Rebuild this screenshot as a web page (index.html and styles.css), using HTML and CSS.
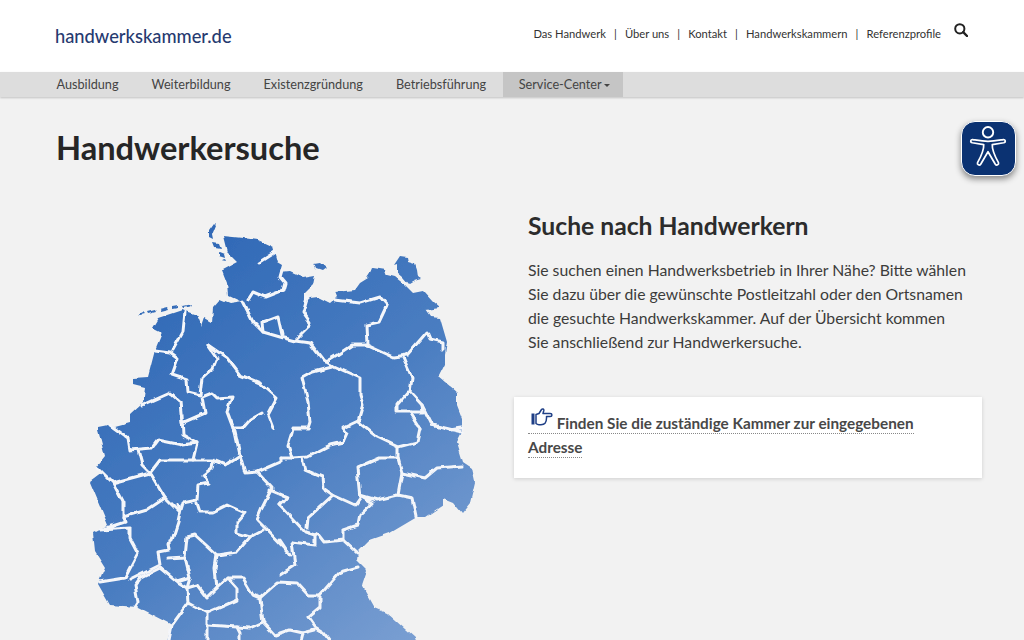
FILE: index.html
```html
<!DOCTYPE html>
<html lang="de">
<head>
<meta charset="utf-8">
<title>Handwerkersuche</title>
<link rel="stylesheet" href="styles.css">
</head>
<body>
<header class="top">
  <a class="logo" href="#">handwerkskammer.de</a>
  <div class="top-right">
    <nav class="meta">
      <a href="#">Das Handwerk</a><span class="sep">|</span><a href="#">Über uns</a><span class="sep">|</span><a href="#">Kontakt</a><span class="sep">|</span><a href="#">Handwerkskammern</a><span class="sep">|</span><a href="#">Referenzprofile</a>
    </nav>
    <svg class="search" viewBox="0 0 14 14" width="14" height="14"><circle cx="5.8" cy="5.8" r="4.6" fill="none" stroke="#222" stroke-width="2"/><path d="M9.2 9.2 13 13" stroke="#222" stroke-width="2.4" stroke-linecap="round"/></svg>
  </div>
</header>
<nav class="main-nav">
  <a href="#">Ausbildung</a>
  <a href="#">Weiterbildung</a>
  <a href="#">Existenzgründung</a>
  <a href="#">Betriebsführung</a>
  <a class="active" href="#">Service-Center<i class="caret"></i></a>
</nav>
<main class="page">
  <h1>Handwerkersuche</h1>
  <div class="cols">
    <div class="map-col">
      <svg class="map" viewBox="80 215 400 425" width="400" height="425">
        <defs>
          <linearGradient id="g" gradientUnits="userSpaceOnUse" x1="130" y1="280" x2="420" y2="640">
            <stop offset="0" stop-color="#2f68b6"/>
            <stop offset="0.5" stop-color="#4a7dc1"/>
            <stop offset="1" stop-color="#7a9fd2"/>
          </linearGradient>
          <filter id="rough" x="-5%" y="-5%" width="110%" height="110%">
            <feTurbulence type="fractalNoise" baseFrequency="0.11" numOctaves="1" seed="4"/>
            <feDisplacementMap in="SourceGraphic" scale="5" xChannelSelector="R" yChannelSelector="G"/>
            <feGaussianBlur stdDeviation="0.5"/>
          </filter>
        </defs>
        <g filter="url(#rough)">
        <g fill="url(#g)">
          <path d="M223 236 243 238 258 240 273 247 277 262 282 265 280 272 290 271 303 277 315 275 313 285 305 293 305 302 310 298 318 297 330 303 337 297 335 292 355 290 360 283 368 278 372 268 385 270 387 275 395 277 405 285 413 293 423 291 433 302 440 308 425 310 430 317 440 318 447 342 445 355 445 365 439 377 457 392 457 405 462 418 462 432 457 442 463 462 472 468 475 482 470 503 462 513 453 502 443 498 443 505 425 517 417 517 390 533 370 540 358 552 357 560 367 570 362 585 375 608 387 613 415 638 420 650 165 650 168 638 172 625 137 607 110 605 98 584 105 568 95 552 93 533 108 525 90 482 102 473 97 467 105 457 98 430 98 427 108 425 115 427 130 423 130 415 143 403 145 388 133 385 133 378 148 377 155 350 162 333 152 328 158 318 182 310 197 315 202 327 205 318 212 322 213 308 220 300 230 304 243 302 228 295 227 283 222 270 237 262 227 252Z"/>
          <path d="M214 223 216 225 212 235 213 240 209 238 209 230Z"/>
          <path d="M213 243 219 244 221 249 215 248ZM219 252 224 254 225 258 219 256ZM222 260 227 261 226 259Z"/>
          <path d="M139 314 143 312 145 314 141 315ZM147 312 155 310 156 312 148 314ZM160 309 168 307 169 309 161 311ZM172 307 178 306 178 308 172 309ZM182 306 192 304 191 306 183 308Z"/>
          <path d="M314 264 320 263 326 268 322 271 316 269Z"/>
          <path d="M367 277 372 270 385 271 381 274 372 275Z"/>
          <path d="M400 256 407 257 408 262 415 264 417 270 418 277 421 279 414 281 409 284 403 277 397 272 397 264 394 265Z"/>
        </g>
        <g class="lines">
          <path d="M243 302 253 322 263 332 280 337 295 341 310 343 323 360 333 366 360 378 360 395 363 405 358 422 377 437 398 447 417 442 420 428 417 425"/>
          <path d="M263 332 262 323 278 317 282 335"/>
          <path d="M248 300 253 292 265 297 283 290 285 283 280 277 282 270"/>
          <path d="M258 263 275 252"/>
          <path d="M295 341 308 328 310 322 303 312 307 298"/>
          <path d="M325 362 337 355 352 345 367 345 366 325 379 322 387 305 380 297 360 303 335 300"/>
          <path d="M367 345 393 357 407 355 427 332 430 339 443 342 443 350"/>
          <path d="M403 357 412 378 410 392 422 405 432 425 450 430 462 428"/>
          <path d="M408 392 397 405 397 412 410 412 423 412 422 405"/>
          <path d="M410 412 420 428"/>
          <path d="M332 367 313 372 302 378 308 402 310 422 308 428 293 428 292 432 288 445 292 458 280 458"/>
          <path d="M360 420 343 428 347 433 343 442 330 445 307 457 292 458"/>
          <path d="M155 350 170 352 178 358 172 375 187 380 188 392 200 395 202 378 213 368 217 358 208 345"/>
          <path d="M173 350 183 332 185 312"/>
          <path d="M208 345 227 358 240 375 260 383 277 398 268 415 273 428"/>
          <path d="M262 413 250 420 243 428 233 428 227 412 232 397 217 398 212 393 202 397 205 413 182 423 180 402 170 393 143 405"/>
          <path d="M182 415 183 435 197 443 193 460"/>
          <path d="M110 425 128 438 130 450 152 448 158 440 182 445 197 443"/>
          <path d="M138 450 142 465 150 473 160 460 213 460 225 465 240 455 235 432 233 428"/>
          <path d="M98 468 113 483 123 502 123 517 147 510 165 498 150 473 113 483"/>
          <path d="M123 517 125 522 100 530 130 528 130 538 138 553 125 578 100 582"/>
          <path d="M165 498 180 513 178 522 172 540 167 543 168 550 158 552 160 565 130 580"/>
          <path d="M177 505 180 513 183 503 197 500 198 485 208 483 203 475 212 468 213 462"/>
          <path d="M197 503 200 512 213 512 227 505 245 513 237 522 237 533 250 537 263 530"/>
          <path d="M240 455 245 473 257 472 280 462 280 458"/>
          <path d="M257 472 272 488 262 508 257 520 265 528 288 552"/>
          <path d="M270 490 287 497 280 505"/>
          <path d="M250 537 237 552 217 555 195 535 187 537 185 557 168 558"/>
          <path d="M185 557 190 578 177 582 160 568"/>
          <path d="M217 555 215 568 217 588 207 598 197 585 187 588 190 578"/>
          <path d="M160 568 140 578 135 585 138 602 135 607"/>
          <path d="M177 582 187 588 188 603 207 613 237 600 237 588 228 578 217 588"/>
          <path d="M188 603 172 625 168 645"/>
          <path d="M207 613 207 645"/>
          <path d="M208 625 237 627 240 633 240 645"/>
          <path d="M228 578 243 578 253 595 260 598 278 582 297 583 308 595 320 595"/>
          <path d="M237 627 250 628 263 622 260 598"/>
          <path d="M263 622 275 635 290 630 303 633 300 645"/>
          <path d="M303 633 315 630"/>
          <path d="M302 458 305 470 322 477 323 488 333 495 355 505 360 498 357 468 380 458 398 458 402 473 398 495 377 500 360 495 373 503 360 515 358 525 343 530 343 540 357 553"/>
          <path d="M398 447 398 458"/>
          <path d="M432 425 462 432"/>
          <path d="M402 473 425 478 437 468 462 466"/>
          <path d="M398 495 412 498 416 517"/>
          <path d="M333 495 308 518 307 528"/>
          <path d="M280 505 305 532 315 535 318 533 325 542 343 540"/>
          <path d="M292 542 315 545 315 535"/>
          <path d="M292 542 293 550 295 565 280 575"/>
          <path d="M280 540 290 555"/>
          <path d="M358 567 340 572 320 595 320 607 308 617 315 627 323 632 333 645"/>
        </g>
        </g>
      </svg>
    </div>
    <section class="intro">
      <h2>Suche nach Handwerkern</h2>
      <p>Sie suchen einen Handwerksbetrieb in Ihrer Nähe? Bitte wählen Sie dazu über die gewünschte Postleitzahl oder den Ortsnamen die gesuchte Handwerkskammer. Auf der Übersicht kommen Sie anschließend zur Handwerkersuche.</p>
      <div class="card">
        <a href="#"><svg class="hand" viewBox="0 0 22 18" width="22" height="18"><path d="M0.5 5.5h3v11h-3z" fill="#1f3f86"/><path d="M5 6.5 8 5.5 10.5 1.5c1-1.2 2.6-.4 2.3 1L12 5.500h7.200c2.300 0 2.300 3 0 3H15.500c.2 2.500-.3 5.200-1.500 6.800-1 1.200-2.500 1.400-4 1.400H8c-1.300 0-2.200-.5-3-1.200z" fill="none" stroke="#1f3f86" stroke-width="1.500" stroke-linejoin="round"/></svg> Finden Sie die zuständige Kammer zur eingegebenen Adresse</a>
      </div>
    </section>
  </div>
</main>
<button class="a11y" aria-label="Barrierefreiheit">
  <svg viewBox="0 0 40 44" width="38" height="42"><circle cx="20" cy="6.500" r="5.500" fill="none" stroke="#fff" stroke-width="2"/><path d="M3.500 17.500 15.500 19.500c.3 5-1.500 10-6.500 19-.8 2 2 3.500 3.300 1.700L20 27l7.700 13.200c1.300 1.800 4.100.3 3.300-1.700-5-9-6.800-14-6.500-19l12-2c2.500-.5 2-3.700-.5-3.300-5 .8-10 1.800-16 1.800s-11-1-16-1.800c-2.500-.4-3 2.800-.5 3.300z" fill="none" stroke="#fff" stroke-width="1.800" stroke-linejoin="round"/></svg>
</button>
</body>
</html>
```
FILE: styles.css
```css
* { box-sizing: border-box; }
html, body { margin: 0; height: 640px; overflow: hidden; }
body { background: #f2f2f2; font-family: "Lato", "Noto Sans", sans-serif; color: #3c3c3b; position: relative; }
a { color: inherit; text-decoration: none; }
.top { height: 72px; background: #fff; display: flex; justify-content: space-between; padding: 0 56px 0 55px; }
.logo { font-size: 18.3px; font-weight: 500; color: #263a70; margin-top: 24px; line-height: 24px; }
.top-right { display: flex; align-items: flex-start; gap: 13px; }
.meta { font-size: 11.2px; line-height: 16px; margin-top: 26px; color: #333; display: flex; }
.sep { margin: 0 8.1px; }
.search { margin-top: 23px; }
.main-nav { height: 25px; background: #ddd; display: flex; padding-left: 40px; box-shadow: 0 1px 2px rgba(0,0,0,.2); font-size: 12.7px; line-height: 24px; color: #444; }
.main-nav a { padding: 0 16.5px; }
.main-nav .active { background: #c5c5c5; width: 120px; padding: 0 0 0 16px; white-space: nowrap; }
.caret { display: inline-block; margin-left: 2px; vertical-align: middle; border-top: 3px solid #444; border-left: 3px solid transparent; border-right: 3px solid transparent; }
.page { padding: 0 40px 0 56px; }
h1 { margin: 32px 0 0; font-size: 32.6px; line-height: 38px; font-weight: 700; color: #262626; }
.cols { display: flex; }
.map-col { width: 458px; flex: none; margin-top: 48px; margin-left: 24px; margin-right: -24px; height: 425px; }
.map { display: block; }
.intro { width: 470px; }
.intro h2 { margin: 42px 0 0 14px; font-size: 24.7px; line-height: 34px; font-weight: 700; color: #2c2c2c; }
.intro p { margin: 15px 0 0 14px; font-size: 15.75px; line-height: 24px; width: 441px; }
.card { margin-top: 43px; width: 468px; height: 81px; background: #fff; box-shadow: 0 1px 4px rgba(0,0,0,.15); padding: 11px 14px; font-size: 15.3px; font-weight: 700; line-height: 24px; color: #484848; }
.card a { border-bottom: 1px dotted #888; padding-bottom: 1px; }
.hand { margin: 0 0 0 3px; vertical-align: 3px; }
.lines path { fill: none; stroke: #f4f6fa; stroke-width: 3; stroke-linejoin: round; stroke-linecap: round; }
.a11y { position: absolute; left: 961px; top: 121px; width: 55px; height: 55px; padding: 0 2px 3px 0; background: #0b3272; border: 1.500px solid #fff; border-radius: 14px; box-shadow: 0 3px 6px rgba(0,0,0,.45); display: flex; align-items: center; justify-content: center; }
```
